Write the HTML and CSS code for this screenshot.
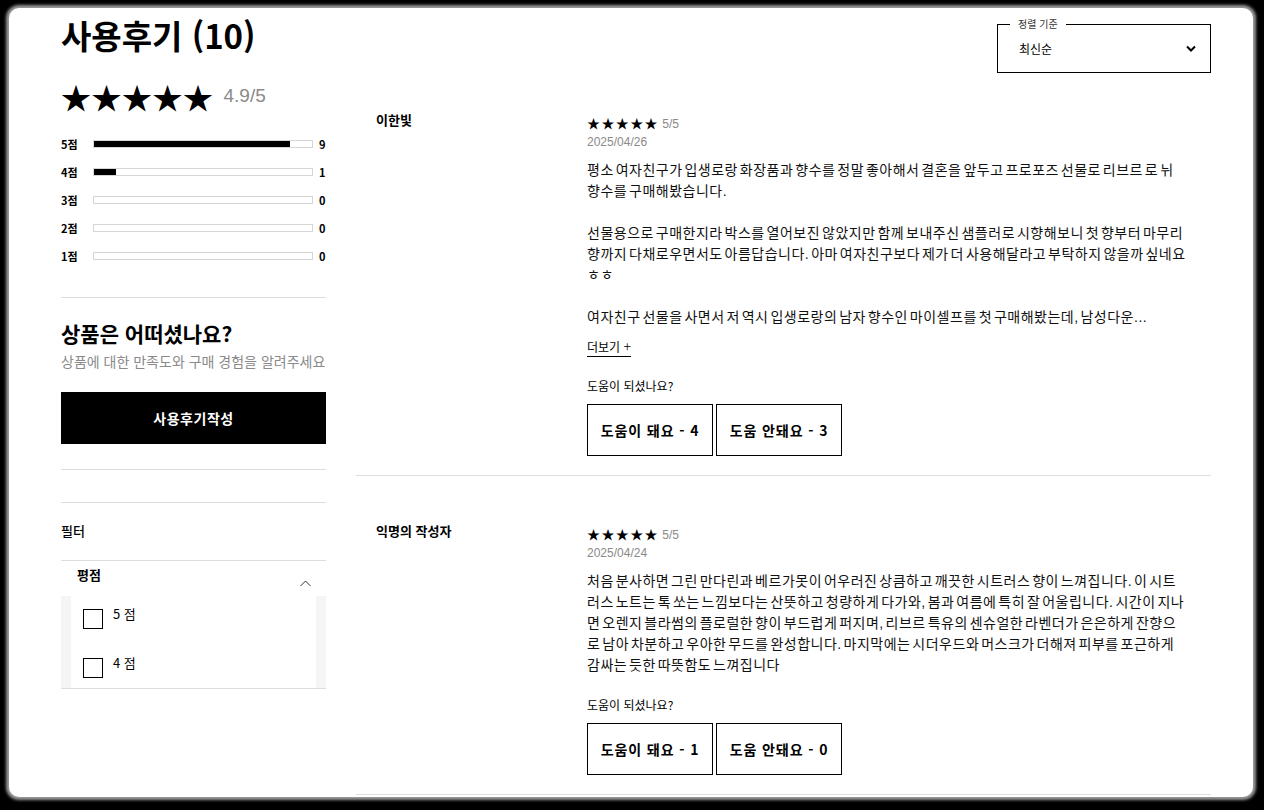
FILE: index.html
```html
<!DOCTYPE html>
<html lang="ko">
<head>
	<title>사용후기</title>
	<meta charset="UTF-8">

	<link rel="stylesheet" href="styles.css">
</head>
<body>
<div class="sheet">
	<div class="page">
		<aside class="summary">
			<h1 class="title">사용후기 (10)</h1>
			<div class="score">
				<span class="stars-lg">★★★★★</span>
				<span class="score-num">4.9/5</span>
			</div>
			<ul class="dist">
				<li><span class="dist-label">5점</span><span class="bar"><span class="fill" style="width: 90%"></span></span><span class="dist-count">9</span></li>
				<li><span class="dist-label">4점</span><span class="bar"><span class="fill" style="width: 10%"></span></span><span class="dist-count">1</span></li>
				<li><span class="dist-label">3점</span><span class="bar"><span class="fill" style="width: 0%"></span></span><span class="dist-count">0</span></li>
				<li><span class="dist-label">2점</span><span class="bar"><span class="fill" style="width: 0%"></span></span><span class="dist-count">0</span></li>
				<li><span class="dist-label">1점</span><span class="bar"><span class="fill" style="width: 0%"></span></span><span class="dist-count">0</span></li>
			</ul>
			<section class="ask">
				<h2>상품은 어떠셨나요?</h2>
				<p>상품에 대한 만족도와 구매 경험을 알려주세요</p>
				<button class="write-btn" type="button">사용후기작성</button>
			</section>
			<div class="gap"></div>
			<div class="filter-title">필터</div>
			<div class="filter-group">
				<div class="group-head">
					<span>평점</span>
					<svg class="chev-up" width="11" height="7" viewBox="0 0 11 7"><path d="M0.5 6L5.5 1l5 5" fill="none" stroke="#333" stroke-width="1"/></svg>
				</div>
				<div class="group-body">
					<label class="check"><span class="box"></span><span class="check-text">5 점</span></label>
					<label class="check"><span class="box"></span><span class="check-text">4 점</span></label>
				</div>
			</div>
		</aside>

		<main class="reviews">
			<div class="toolbar">
				<fieldset class="sort">
					<legend>정렬 기준</legend>
					<div class="sort-inner">
						<span>최신순</span>
						<svg width="10" height="7" viewBox="0 0 10 7"><path d="M1 1.5l4 4 4-4" fill="none" stroke="#000" stroke-width="2"/></svg>
					</div>
				</fieldset>
			</div>

			<article class="review">
				<div class="author">이한빛</div>
				<div class="review-body">
					<div class="rating"><span class="stars-sm">★★★★★</span> 5/5</div>
					<div class="date">2025/04/26</div>
					<div class="text">
						<p>평소 여자친구가 입생로랑 화장품과 향수를 정말 좋아해서 결혼을 앞두고 프로포즈 선물로 리브르 로 뉘 향수를 구매해봤습니다.</p>
						<p>선물용으로 구매한지라 박스를 열어보진 않았지만 함께 보내주신 샘플러로 시향해보니 첫 향부터 마무리 향까지 다채로우면서도 아름답습니다. 아마 여자친구보다 제가 더 사용해달라고 부탁하지 않을까 싶네요 ㅎㅎ</p>
						<p>여자친구 선물을 사면서 저 역시 입생로랑의 남자 향수인 마이셀프를 첫 구매해봤는데, 남성다운...</p>
					</div>
					<a class="more" href="#">더보기 <span class="plus">+</span></a>
					<div class="helpful">
						<div class="helpful-q">도움이 되셨나요?</div>
						<div class="helpful-btns">
							<button type="button">도움이 돼요 - 4</button>
							<button type="button">도움 안돼요 - 3</button>
						</div>
					</div>
				</div>
			</article>

			<article class="review">
				<div class="author">익명의 작성자</div>
				<div class="review-body">
					<div class="rating"><span class="stars-sm">★★★★★</span> 5/5</div>
					<div class="date">2025/04/24</div>
					<div class="text">
						<p>처음 분사하면 그린 만다린과 베르가못이 어우러진 상큼하고 깨끗한 시트러스 향이 느껴집니다. 이 시트러스 노트는 톡 쏘는 느낌보다는 산뜻하고 청량하게 다가와, 봄과 여름에 특히 잘 어울립니다. 시간이 지나면 오렌지 블라썸의 플로럴한 향이 부드럽게 퍼지며, 리브르 특유의 센슈얼한 라벤더가 은은하게 잔향으로 남아 차분하고 우아한 무드를 완성합니다. 마지막에는 시더우드와 머스크가 더해져 피부를 포근하게 감싸는 듯한 따뜻함도 느껴집니다</p>
					</div>
					<div class="helpful">
						<div class="helpful-q">도움이 되셨나요?</div>
						<div class="helpful-btns">
							<button type="button">도움이 돼요 - 1</button>
							<button type="button">도움 안돼요 - 0</button>
						</div>
					</div>
				</div>
			</article>
		</main>
	</div>
</div>
</body>
</html>
```

FILE: styles.css
```css
html, body {
	margin: 0;
	padding: 0;
	height: 100%;
	overflow: hidden;
}
body {
	background: #000;
	font-family: "Noto Sans CJK KR", "Noto Sans", sans-serif;
	color: #000;
}
.sheet {
	margin: 8px 11px 0 9px;
	height: 789px;
	background: #fff;
	border-radius: 10px;
	box-shadow: 0 0 3px 3px #9a9a9a;
	overflow: hidden;
}
.page {
	display: grid;
	grid-template-columns: 265px 1fr;
	column-gap: 30px;
	padding: 7px 42px 0 52px;
}

/* left column */
.title {
	margin: 0;
	font-size: 33px;
	line-height: 40px;
	font-weight: 700;
}
.score {
	display: flex;
	align-items: center;
	height: 30px;
	margin-top: 26px;
}
.stars-lg {
	font-size: 30px;
	line-height: 30px;
	letter-spacing: 0.5px;
}
.score-num {
	margin-left: 10px;
	font-family: "Liberation Sans", sans-serif;
	font-size: 19px;
	color: #8a8a8a;
}
.dist {
	list-style: none;
	margin: 19px 0 0;
	padding: 0 0 27px;
	border-bottom: 1px solid #ddd;
}
.dist li {
	display: flex;
	align-items: center;
	height: 28px;
}
.dist-label {
	width: 32px;
	font-size: 11px;
	font-weight: 700;
}
.bar {
	width: 220px;
	height: 8px;
	box-sizing: border-box;
	border: 1px solid #d6d6d6;
}
.fill {
	display: block;
	height: 100%;
	background: #000;
}
.dist-count {
	margin-left: 6px;
	font-size: 11px;
	font-weight: 700;
}
.ask {
	padding: 20px 0 25px;
	border-bottom: 1px solid #ddd;
}
.ask h2 {
	margin: 0;
	font-size: 21px;
	line-height: 30px;
	font-weight: 700;
}
.ask p {
	margin: 3px 0 0;
	font-size: 14px;
	line-height: 20px;
	color: #8a8a8a;
}
.write-btn {
	display: block;
	width: 100%;
	height: 52px;
	margin-top: 21px;
	border: 0;
	background: #000;
	color: #fff;
	font-family: inherit;
	font-size: 14px;
	font-weight: 700;
	letter-spacing: 0.5px;
}
.gap {
	height: 32px;
	border-bottom: 1px solid #ddd;
}
.filter-title {
	padding: 18px 0 19px;
	font-size: 13px;
	line-height: 20px;
	font-weight: 500;
	border-bottom: 1px solid #ddd;
}
.filter-group {
	border-bottom: 1px solid #ddd;
}
.group-head {
	display: flex;
	justify-content: space-between;
	height: 35px;
	padding: 4px 15px 0 16px;
	box-sizing: border-box;
	font-size: 13px;
	line-height: 20px;
	font-weight: 700;
}
.chev-up {
	margin-top: 15px;
}
.group-body {
	margin: 0 10px;
	padding: 13px 12px 10px;
	background: #fff;
	box-shadow: -10px 0 0 #f5f5f5, 10px 0 0 #f5f5f5;
	display: flex;
	flex-direction: column;
	gap: 29px;
}
.check {
	display: flex;
	align-items: flex-start;
	height: 20px;
}
.box {
	width: 20px;
	height: 20px;
	box-sizing: border-box;
	border: 1px solid #000;
}
.check-text {
	margin: -4px 0 0 10px;
	font-size: 13px;
	line-height: 18px;
}

/* right column */
.toolbar {
	display: flex;
	justify-content: flex-end;
	align-items: flex-start;
	height: 67px;
}
.sort {
	width: 214px;
	box-sizing: border-box;
	margin: 2px 0 0;
	padding: 0 14px 0 21px;
	border: 1px solid #000;
}
.sort legend {
	margin-left: -9px;
	padding: 0 8px;
	font-size: 10px;
	line-height: 14px;
	color: #333;
}
.sort-inner {
	display: flex;
	align-items: center;
	justify-content: space-between;
	height: 34px;
	padding-bottom: 7px;
	font-size: 12px;
}
.review {
	display: flex;
	padding: 45px 0 19px 20px;
	border-bottom: 1px solid #ddd;
}
.review:first-of-type {
	padding-top: 28px;
}
.author {
	width: 211px;
	flex-shrink: 0;
	font-size: 13px;
	line-height: 20px;
	font-weight: 700;
}
.review-body {
	flex: 1;
	padding-top: 4px;
}
.rating {
	font-family: "Liberation Sans", sans-serif;
	font-size: 12px;
	line-height: 18px;
	color: #8a8a8a;
}
.stars-sm {
	font-family: "Noto Sans CJK KR", sans-serif;
	font-size: 13px;
	letter-spacing: 1.4px;
	color: #000;
}
.date {
	font-family: "Liberation Sans", sans-serif;
	font-size: 12px;
	line-height: 18px;
	color: #8a8a8a;
}
.text {
	width: 600px;
	margin-top: 9px;
	font-family: "Liberation Sans", "Noto Sans CJK KR", sans-serif;
	font-size: 14px;
	line-height: 21px;
	letter-spacing: 0.5px;
	word-spacing: -2.5px;
	color: #111;
}
.text p {
	margin: 0 0 21px;
}
.text p:last-child {
	margin-bottom: 0;
}
.more {
	display: inline-block;
	margin-top: 9px;
	font-size: 12px;
	line-height: 19px;
	color: #000;
	text-decoration: none;
	border-bottom: 1px solid #000;
}
.plus {
	font-weight: 300;
	font-size: 14px;
}
.helpful {
	margin-top: 21px;
}
.helpful-q {
	font-size: 12px;
	line-height: 16px;
}
.helpful-btns {
	display: flex;
	gap: 3px;
	margin-top: 10px;
}
.helpful-btns button {
	width: 126px;
	height: 52px;
	border: 1px solid #000;
	background: #fff;
	font-family: inherit;
	font-size: 14px;
	font-weight: 700;
	letter-spacing: 0.9px;
	color: #000;
	padding: 0;
}
```
